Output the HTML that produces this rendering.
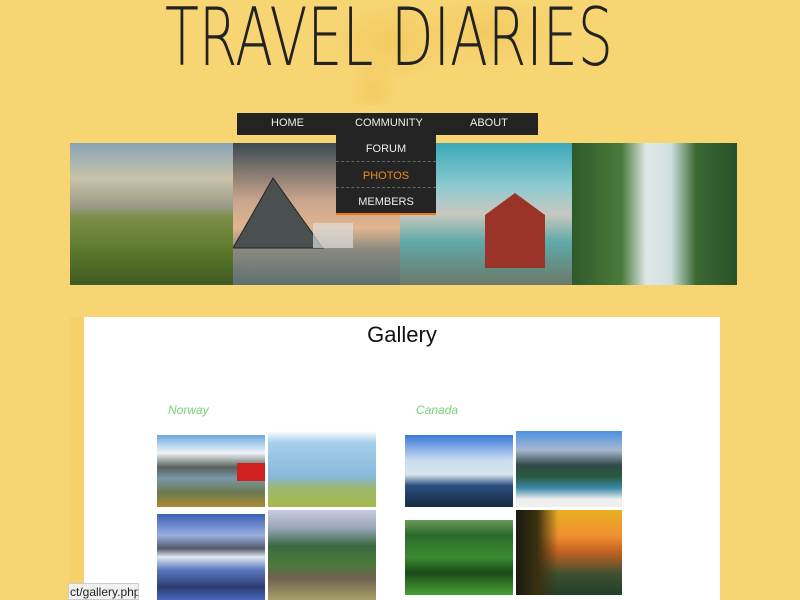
<!DOCTYPE html>
<html><head><meta charset="utf-8"><style>
*{margin:0;padding:0;box-sizing:border-box}
body{width:800px;height:600px;overflow:hidden;background:#f7d573;font-family:"Liberation Sans",sans-serif;position:relative}
.abs{position:absolute}
.title{left:160px;top:-6px;width:460px;height:90px}
.map{left:320px;top:0;width:240px;height:105px;background:radial-gradient(ellipse 60px 40px at 30% 40%,rgba(240,192,80,.55),transparent),radial-gradient(ellipse 70px 35px at 70% 30%,rgba(240,192,80,.55),transparent),radial-gradient(ellipse 25px 30px at 22% 85%,rgba(240,192,80,.5),transparent)}
.nav{left:237px;top:113px;width:301px;height:22px;background:#232323;color:#eee;font-size:11px}
.nav span{position:absolute;top:4px}
.dd{left:336px;top:135px;width:100px;height:80px;background:#242424;border-bottom:2px solid #f07a10;font-size:11px;color:#eee;z-index:3}
.dd div{height:26.5px;line-height:28px;text-align:center;border-bottom:1px dashed #666}
.dd div:last-child{border-bottom:none}
.strip{top:143px;height:142px}
.panel{left:84px;top:317px;width:636px;height:283px;background:#fff}
.side{left:70px;top:317px;width:14px;height:283px;background:#f6d06a}
.ph{position:absolute;overflow:hidden}
.lbl{position:absolute;font-style:italic;color:#78d078;font-size:12px}
</style></head><body>
<div class="abs map"></div>
<svg class="abs title" viewBox="0 0 460 90"><text x="5" y="71" font-family="DejaVu Sans ExtraLight, DejaVu Sans" font-weight="200" font-size="80" textLength="448" lengthAdjust="spacingAndGlyphs" fill="#222">TRAVEL DIARIES</text></svg>
<div class="abs strip" style="left:70px;width:163px;background:linear-gradient(#8aa4b8 0%,#c8c2a8 25%,#9a9a88 45%,#7d8f4a 52%,#5d7a2c 75%,#3f5a22 100%)"></div>
<div class="abs strip" style="left:233px;width:167px;background:linear-gradient(#3a4a52 0%,#c9a48c 40%,#e0b690 60%,#8a8a80 75%,#5e7070 100%)"></div>
<svg class="abs" style="left:233px;top:168px" width="167" height="90"><polygon points="0,80 40,10 90,80" fill="#4a5050" stroke="#222"/><rect x="80" y="55" width="40" height="25" fill="#ddd" opacity=".7"/></svg>
<div class="abs strip" style="left:400px;width:172px;background:linear-gradient(#3aa8b8 0%,#8ccad0 30%,#c8c8c0 50%,#5fa8a8 70%,#6a7a6a 100%)"></div>
<svg class="abs" style="left:480px;top:190px" width="80" height="80"><polygon points="5,25 35,3 65,25 65,78 5,78" fill="#9a3428"/></svg>
<div class="abs strip" style="left:572px;width:165px;background:linear-gradient(90deg,#2e5a2a 0%,#4a7a3a 30%,#dfe8e8 45%,#cfe0e0 60%,#3a6a32 75%,#28502a 100%)"></div>
<div class="abs nav"><span style="left:34px">HOME</span><span style="left:118px">COMMUNITY</span><span style="left:233px">ABOUT</span></div>
<div class="abs dd"><div>FORUM</div><div style="color:#f08a20">PHOTOS</div><div>MEMBERS</div></div>
<div class="abs side"></div>
<div class="abs panel"></div>
<div class="abs" style="left:84px;width:636px;top:322px;text-align:center;font-size:22px;color:#111">Gallery</div>
<div class="lbl" style="left:168px;top:403px">Norway</div>
<div class="lbl" style="left:416px;top:403px">Canada</div>
<div class="ph" style="left:157px;top:435px;width:108px;height:72px;background:linear-gradient(#6aa8e0 0%,#f0f4f8 25%,#55605a 45%,#7a98a8 60%,#6a7a50 80%,#b08a30 100%)"><div class="ph" style="left:80px;top:28px;width:28px;height:18px;background:#d02020"></div></div>
<div class="ph" style="left:268px;top:431px;width:108px;height:76px;background:linear-gradient(#fff 0%,#a8d0ec 15%,#88b8dc 60%,#9ab870 75%,#a8b848 100%)"></div>
<div class="ph" style="left:157px;top:514px;width:108px;height:86px;background:linear-gradient(#3a60b8 0%,#9ab0e0 25%,#505868 40%,#e0e8f0 50%,#5a78c0 65%,#2c3c70 85%,#4a68c0 100%)"></div>
<div class="ph" style="left:268px;top:510px;width:108px;height:90px;background:linear-gradient(#c8cce0 0%,#9aa4b8 20%,#3a6a40 40%,#4a7a3a 60%,#706050 75%,#a8a068 100%)"></div>
<div class="ph" style="left:405px;top:435px;width:108px;height:72px;background:linear-gradient(#3a78d8 0%,#c8dcf0 35%,#d8e4ec 55%,#2a5080 70%,#1a2a40 100%)"></div>
<div class="ph" style="left:516px;top:431px;width:106px;height:76px;background:linear-gradient(#4a90e0 0%,#a8b8d0 25%,#304a48 45%,#2a5a40 60%,#3a88a8 75%,#f0f0f0 90%)"></div>
<div class="ph" style="left:405px;top:520px;width:108px;height:75px;background:linear-gradient(#6a9a5a 0%,#2a6a2a 20%,#3a8a30 50%,#1a4a1a 70%,#48a030 100%)"></div>
<div class="ph" style="left:516px;top:510px;width:106px;height:85px;background:linear-gradient(90deg,#1a1a10 0%,#3a3010 20%,rgba(0,0,0,0) 40%),linear-gradient(#e8b020 0%,#f09030 30%,#c06020 50%,#405030 75%,#20402a 100%)"></div>
<div class="abs" style="left:68px;top:583px;width:71px;height:17px;background:#f0f0f0;border:1px solid #ccc;font-size:12px;line-height:16px;color:#222;padding-left:1px;white-space:nowrap;overflow:hidden">ct/gallery.php</div>
</body></html>
